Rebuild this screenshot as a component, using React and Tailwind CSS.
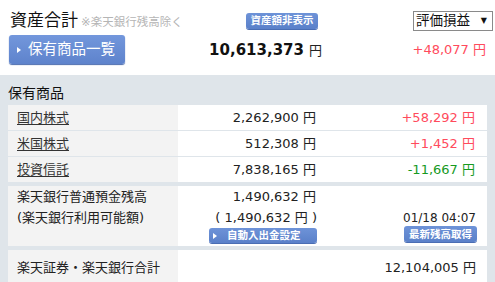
import React from "react";

const rows = [
  { label: "国内株式", amount: "2,262,900", diff: "+58,292", up: true },
  { label: "米国株式", amount: "512,308", diff: "+1,452", up: true },
  { label: "投資信託", amount: "7,838,165", diff: "-11,667", up: false },
];

function Arrow() {
  return <span className="inline-block w-0 h-0 border-y-[3px] border-y-transparent border-l-[4px] border-l-white" />;
}

function SmallButton({ children, arrow, className = "" }) {
  return (
    <div
      className={`flex items-center rounded-[3px] bg-linear-to-b from-[#6e93d8] to-[#5a80c9] text-white font-bold text-[10.5px] leading-none shadow-[0_1px_0_#4a6db3] ${className}`}
    >
      {arrow && (
        <span className="ml-[4px] mr-[10px] flex">
          <Arrow />
        </span>
      )}
      {children}
    </div>
  );
}

export default function App() {
  return (
    <div className="w-[495px] h-[282px] overflow-hidden bg-white text-[#222] font-['DejaVu_Sans','Noto_Sans_CJK_JP',sans-serif]">
      {/* header */}
      <div className="h-[75px] px-[9px] pt-[10px]">
        <div className="flex items-center h-[21px]">
          <div className="w-[237px] flex items-end">
            <span className="ml-[1px] text-[17px] leading-[21px] text-[#111]">資産合計</span>
            <span className="ml-[3px] text-[11.5px] leading-[18px] text-[#b5b5b5]">※楽天銀行残高除く</span>
          </div>
          <SmallButton className="w-[72px] h-[16px] justify-center text-[10.5px]">資産額非表示</SmallButton>
          <div className="ml-auto mr-[-7px] w-[80px] h-[20px] border border-[#8a8a8a] bg-white flex items-center pl-[2px] pr-[5px]">
            <span className="text-[13.5px] leading-none text-[#111]">評価損益</span>
            <span className="ml-auto text-[8px] leading-none text-[#111]">▼</span>
          </div>
        </div>
        <div className="flex items-center h-[29px] mt-[4px]">
          <div className="w-[116px] h-[29px] rounded-[3px] bg-linear-to-b from-[#7397dc] to-[#5e83cc] shadow-[0_1px_1px_#4b6cae] flex items-center text-white">
            <span className="ml-[8px] mr-[7px] flex">
              <Arrow />
            </span>
            <span className="text-[14.5px] leading-none">保有商品一覧</span>
          </div>
          <div className="w-[197px] text-right">
            <span className="text-[15px] font-bold text-[#111]">10,613,373</span>
            <span className="ml-[5px] text-[13px]">円</span>
          </div>
          <div className="flex-1 text-right text-[13px] text-[#ff4b5c]">+48,077 円</div>
        </div>
      </div>

      {/* holdings */}
      <div className="h-[207px] bg-[#dfe5ea] px-[8px] pt-[10px]">
        <div className="text-[14px] leading-[16px] text-[#111] mb-[4px]">保有商品</div>

        <div className="flex flex-col gap-px">
          {rows.map((r) => (
            <div key={r.label} className="flex h-[25px] text-[13px]">
              <div className="w-[170px] bg-[#f3f3f3] pl-[9px] flex items-center">
                <span className="underline text-[#333] underline-offset-2">{r.label}</span>
              </div>
              <div className="flex-1 bg-white flex items-center">
                <div className="w-[140px] text-right pr-[2px]">{r.amount} 円</div>
                <div className={`flex-1 text-right pr-[12px] ${r.up ? "text-[#ff4b5c]" : "text-[#179a1f]"}`}>
                  {r.diff} 円
                </div>
              </div>
            </div>
          ))}
        </div>

        <div className="flex h-[60px] mt-[4px] text-[13px]">
          <div className="w-[170px] bg-[#f3f3f3] pl-[9px] leading-[21px]">
            <div>楽天銀行普通預金残高</div>
            <div>(楽天銀行利用可能額)</div>
          </div>
          <div className="flex-1 bg-white flex">
            <div className="w-[140px] pr-[1px] flex flex-col items-end leading-[21px]">
              <div className="pr-[1px]">1,490,632 円</div>
              <div>( 1,490,632 円 )</div>
              <SmallButton arrow className="w-[108px] h-[15px]">自動入出金設定</SmallButton>
            </div>
            <div className="flex-1 flex flex-col items-end justify-end pr-[10px] pb-[4px]">
              <div className="text-[12px] leading-[16px] mr-[1px]">01/18 04:07</div>
              <SmallButton className="w-[73px] h-[16px] justify-center">最新残高取得</SmallButton>
            </div>
          </div>
        </div>

        <div className="flex h-[36px] mt-[4px] text-[13px]">
          <div className="w-[170px] bg-[#f3f3f3] pl-[9px] flex items-center">楽天証券・楽天銀行合計</div>
          <div className="flex-1 bg-white flex items-center justify-end pr-[11px]">12,104,005 円</div>
        </div>
      </div>
    </div>
  );
}
